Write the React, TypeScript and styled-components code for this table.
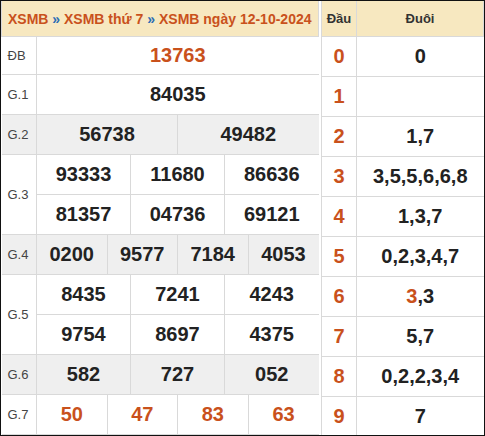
import React from "react";
import styled, { createGlobalStyle } from "styled-components";

const Global = createGlobalStyle`
  html, body { margin: 0; padding: 0; background: #fff; }
  body { font-family: "Liberation Sans", Arial, sans-serif; }
`;

const ORANGE = "#c9511c";
const BORDER = "#d9d9d9";

const Frame = styled.div`
  box-sizing: border-box;
  width: 485px;
  height: 436px;
  border: 1px solid #111;
  display: flex;
  gap: 2px;
  overflow: hidden;
  background: #fff;
`;

const Table = styled.table<{ $w: number }>`
  width: ${(p) => p.$w}px;
  border-collapse: collapse;
  table-layout: fixed;
  flex: none;
`;

const HeadCell = styled.th<{ $align?: string }>`
  height: 35px;
  padding: 0 0 0 6px;
  background: #f7e8c0;
  color: ${ORANGE};
  font-size: 14px;
  font-weight: bold;
  text-align: ${(p) => p.$align || "left"};
  border: 1px solid ${BORDER};
  border-top: none;
  white-space: nowrap;
`;

const SubHead = styled(HeadCell)`
  color: #333;
  font-size: 13px;
  text-align: center;
  padding: 0;
`;

const Sep = styled.span`
  color: #2a6db5;
`;

const Row = styled.tr<{ $gray?: boolean }>`
  background: ${(p) => (p.$gray ? "#efefef" : "#fff")};
`;

const Label = styled.td`
  padding: 0 0 0 6px;
  font-size: 13px;
  color: #444;
  border: 1px solid ${BORDER};
  border-left: none;
`;

const Num = styled.td<{ $hot?: boolean; $h?: number }>`
  height: ${(p) => p.$h || 39}px;
  padding: 0;
  text-align: center;
  font-size: 20px;
  font-weight: bold;
  color: ${(p) => (p.$hot ? ORANGE : "#222")};
  border: 1px solid ${BORDER};
  &:last-child { border-right: none; }
`;

const Hot = styled.span`
  color: ${ORANGE};
`;

type Prize = { label: string; rows: string[][]; gray?: boolean; hot?: boolean; h?: number };

const prizes: Prize[] = [
  { label: "ĐB", rows: [["13763"]], hot: true, h: 37 },
  { label: "G.1", rows: [["84035"]] },
  { label: "G.2", rows: [["56738", "49482"]], gray: true },
  { label: "G.3", rows: [["93333", "11680", "86636"], ["81357", "04736", "69121"]] },
  { label: "G.4", rows: [["0200", "9577", "7184", "4053"]], gray: true },
  { label: "G.5", rows: [["8435", "7241", "4243"], ["9754", "8697", "4375"]] },
  { label: "G.6", rows: [["582", "727", "052"]], gray: true },
  { label: "G.7", rows: [["50", "47", "83", "63"]], hot: true },
];

const loto: [string, React.ReactNode][] = [
  ["0", "0"],
  ["1", ""],
  ["2", "1,7"],
  ["3", "3,5,5,6,6,8"],
  ["4", "1,3,7"],
  ["5", "0,2,3,4,7"],
  ["6", <><Hot>3</Hot>,3</>],
  ["7", "5,7"],
  ["8", "0,2,2,3,4"],
  ["9", "7"],
];

export default function App() {
  return (
    <>
      <Global />
      <Frame>
        <Table $w={318}>
          <colgroup>
            <col style={{ width: 35 }} />
            {Array.from({ length: 12 }).map((_, i) => (
              <col key={i} />
            ))}
          </colgroup>
          <thead>
            <tr>
              <HeadCell colSpan={13}>
                XSMB <Sep>»</Sep> XSMB thứ 7 <Sep>»</Sep> XSMB ngày 12-10-2024
              </HeadCell>
            </tr>
          </thead>
          <tbody>
            {prizes.map((p) =>
              p.rows.map((r, ri) => (
                <Row key={p.label + ri} $gray={p.gray}>
                  {ri === 0 && <Label rowSpan={p.rows.length}>{p.label}</Label>}
                  {r.map((n, i) => (
                    <Num key={i} colSpan={12 / r.length} $hot={p.hot} $h={p.h}>
                      {n}
                    </Num>
                  ))}
                </Row>
              ))
            )}
          </tbody>
        </Table>
        <Table $w={163}>
          <colgroup>
            <col style={{ width: 35 }} />
            <col />
          </colgroup>
          <thead>
            <tr>
              <SubHead>Đầu</SubHead>
              <SubHead>Đuôi</SubHead>
            </tr>
          </thead>
          <tbody>
            {loto.map(([d, t]) => (
              <Row key={d}>
                <Num $hot>{d}</Num>
                <Num>{t}</Num>
              </Row>
            ))}
          </tbody>
        </Table>
      </Frame>
    </>
  );
}
